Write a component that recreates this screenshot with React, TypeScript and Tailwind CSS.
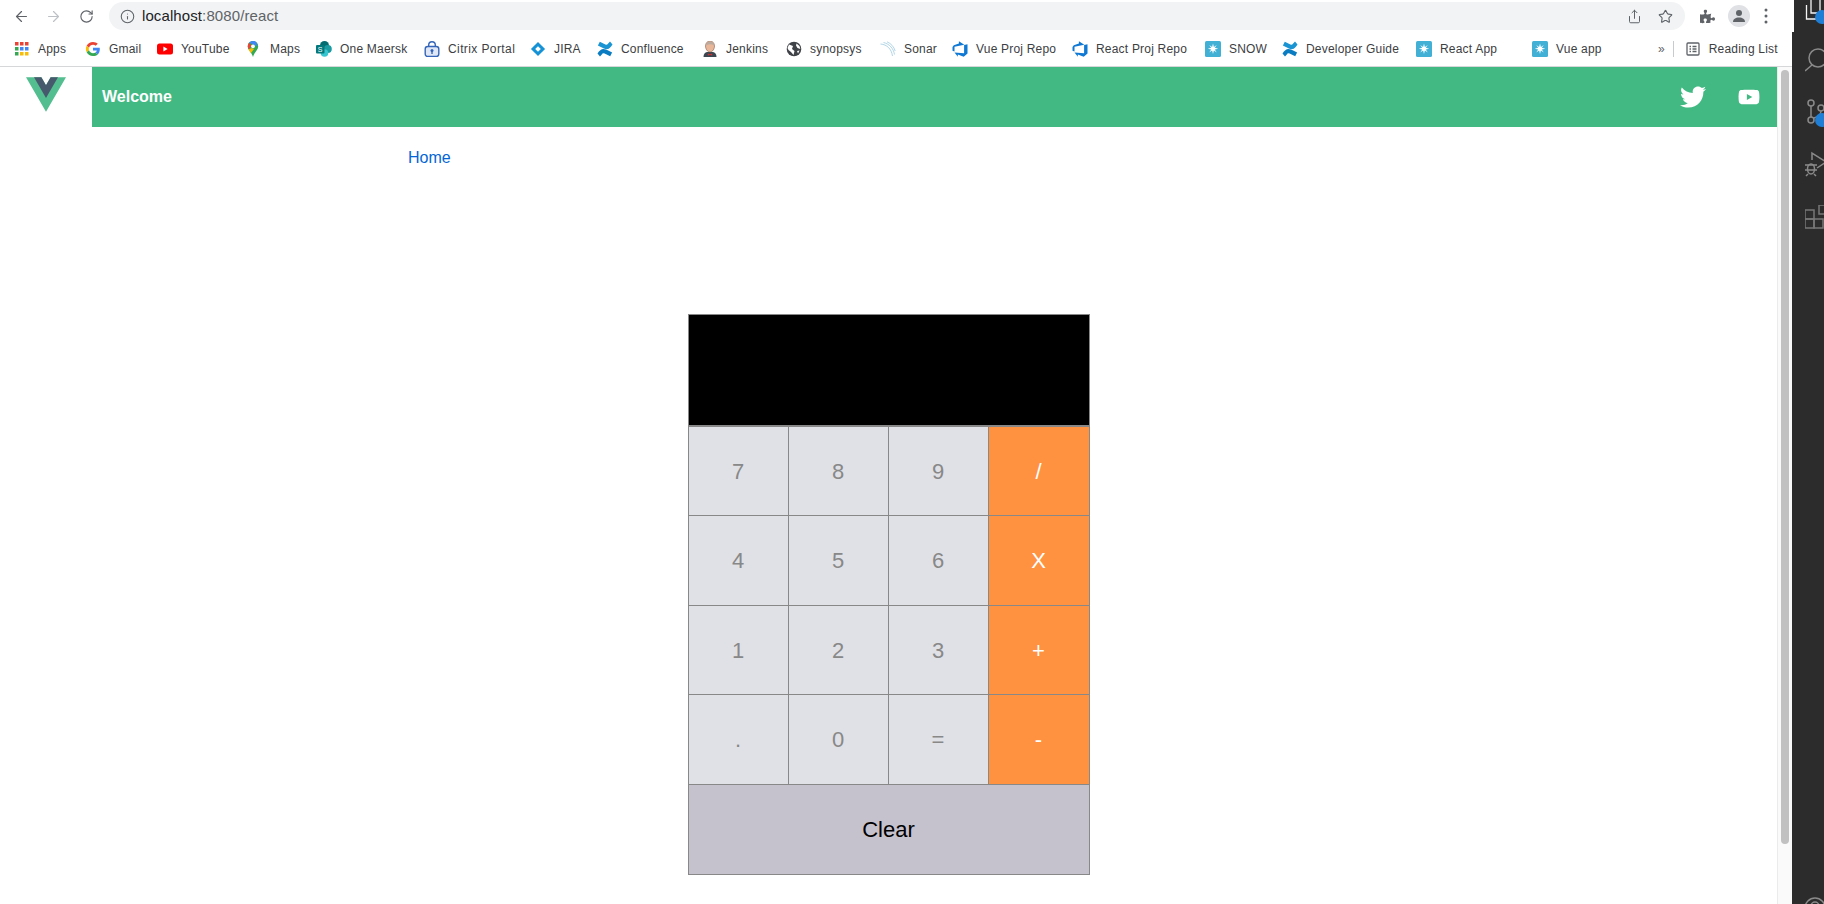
import { ArrowLeft, ArrowRight, RotateCw, Info, Share, Star } from "lucide-react";
import { FaTwitter, FaYoutube, FaPuzzlePiece } from "react-icons/fa";
import type { ReactNode } from "react";

const Snow = () => (
  <svg width="16" height="16" viewBox="0 0 16 16">
    <rect width="16" height="16" rx="1.5" fill="#42b0d5" />
    <path d="M8 2.500l.9 3.400 2.900-2-2 2.900 3.400.9-3.400.9 2 2.900-2.900-2-.9 3.400-.9-3.400-2.900 2 2-2.900-3.400-.9 3.400-.9-2-2.900 2.900 2z" fill="#fff" />
  </svg>
);
const Confluence = () => (
  <svg width="16" height="16" viewBox="0 0 16 16">
    <path d="M.5 12.600c2.600-4.400 5.200-5.600 8.600-4l6 2.800-1.900 3.900-5.600-2.700c-1.400-.6-2.200-.2-3 1.100L3 15.500z" fill="#0a7cc1" />
    <path d="M15.500 3.400c-2.600 4.400-5.200 5.600-8.600 4L.9 4.600 2.800.7l5.600 2.700c1.400.6 2.200.2 3-1.100L13 .5z" fill="#1a94d2" />
  </svg>
);
const Azure = () => (
  <svg width="16" height="16" viewBox="0 0 16 16">
    <path d="M15.500 3.200v9.400l-3.800 3.100-5.900-2.100v2.100L2.500 11.400l9.600.8V4L15.500 3.200zM12.300 3.700 6.900.3v2.300L1.800 4.200.5 5.900v3.800l2 .9V5.800z" fill="#0f78d4" />
  </svg>
);
const Apps = () => (
  <svg width="16" height="16" viewBox="0 0 16 16">
    {[
      [1, 1, "#ea4335"], [6, 1, "#ea4335"], [11, 1, "#ea4335"],
      [1, 6, "#34a853"], [6, 6, "#4285f4"], [11, 6, "#4285f4"],
      [1, 11, "#34a853"], [6, 11, "#fbbc05"], [11, 11, "#fbbc05"],
    ].map(([x, y, c]) => (
      <rect key={`${x}-${y}`} x={x as number} y={y as number} width="3.500" height="3.500" fill={c as string} />
    ))}
  </svg>
);
const Google = () => (
  <svg width="16" height="16" viewBox="-3 -3 54 54">
    <path fill="#EA4335" d="M24 9.500c3.500 0 6.700 1.200 9.200 3.600l6.900-6.900C35.900 2.400 30.500 0 24 0 14.600 0 6.500 5.400 2.600 13.200l8 6.200C12.500 13.700 17.800 9.500 24 9.500z" />
    <path fill="#4285F4" d="M47 24.500c0-1.600-.1-3.100-.4-4.500H24v9h12.900c-.6 3-2.200 5.500-4.700 7.200l7.700 6C44.400 37.900 47 31.800 47 24.500z" />
    <path fill="#FBBC05" d="M10.500 28.600c-.5-1.400-.8-3-.8-4.600s.3-3.200.8-4.600l-8-6.200C.9 16.500 0 20.100 0 24s.9 7.500 2.600 10.800z" />
    <path fill="#34A853" d="M24 48c6.500 0 11.900-2.100 15.900-5.800l-7.700-6c-2.100 1.400-4.900 2.300-8.200 2.300-6.200 0-11.500-4.200-13.400-9.900l-8 6.200C6.500 42.600 14.600 48 24 48z" />
  </svg>
);
const YouTubeFav = () => (
  <svg width="16" height="16" viewBox="0 0 16 16">
    <rect y="2.500" width="16" height="11" rx="2.500" fill="#f00" />
    <path d="M6.400 5.600v4.800L10.600 8z" fill="#fff" />
  </svg>
);
const MapsPin = () => (
  <svg width="16" height="16" viewBox="0 0 16 16">
    <path d="M8 0C5 0 2.800 2.300 2.800 5.200 2.800 9 6.600 11 8 16c1.400-5 5.200-7 5.200-10.800C13.200 2.300 11 0 8 0z" fill="#34a853" />
    <path d="M4 1.800 12 5.200c.6-2.300-.8-5.200-4-5.200-1.600 0-3 .7-4 1.800z" fill="#4285f4" />
    <path d="M2.800 5.200C2.800 3.900 3.200 2.700 4 1.800L6.500 4.500 3.600 8.400C3.100 7.500 2.800 6.400 2.800 5.200z" fill="#ea4335" />
    <path d="M3.600 8.400 6.500 6.900l2.500 1-3 4.100C5 10.700 4.100 9.500 3.600 8.400z" fill="#fbbc05" />
    <circle cx="8" cy="5.300" r="1.900" fill="#fff" />
  </svg>
);
const SharePoint = () => (
  <svg width="16" height="16" viewBox="0 0 16 16">
    <circle cx="8.500" cy="4.500" r="4.500" fill="#036c70" />
    <circle cx="11.800" cy="8" r="4" fill="#1a9ba1" />
    <circle cx="8.500" cy="12" r="3.800" fill="#37c6d0" />
    <rect x="0" y="4" width="8.500" height="8.500" rx="1" fill="#03787c" />
    <text x="4.200" y="11" fontSize="7" fill="#fff" textAnchor="middle" fontFamily="Liberation Sans">S</text>
  </svg>
);
const Citrix = () => (
  <svg width="16" height="16" viewBox="0 0 16 16">
    <rect x="1.200" y="5.500" width="13.600" height="10" rx="2.500" fill="#dfe7f7" stroke="#3465b8" strokeWidth="1.400" />
    <path d="M4.700 5.500V4a3.300 3.300 0 0 1 6.600 0v1.500" fill="none" stroke="#3465b8" strokeWidth="1.400" />
    <circle cx="8" cy="9.500" r="1.500" fill="#3465b8" />
    <rect x="7.300" y="9.500" width="1.400" height="3.500" fill="#3465b8" />
  </svg>
);
const Jira = () => (
  <svg width="16" height="16" viewBox="0 0 16 16">
    <rect x="3" y="3" width="10" height="10" transform="rotate(45 8 8)" fill="#1592d6" />
    <rect x="6" y="6" width="4" height="4" transform="rotate(45 8 8)" fill="#fff" />
  </svg>
);
const Jenkins = () => (
  <svg width="16" height="16" viewBox="0 0 16 16">
    <path d="M1.500 16c0-3 1.500-4.500 3.500-5h6c2 .5 3.500 2 3.500 5z" fill="#3a4750" />
    <path d="M3.500 5c0-3 2-5 4.500-5s4.500 2 4.500 5-2 6-4.500 6-4.500-3-4.500-6z" fill="#e8b79a" stroke="#8a5a44" strokeWidth=".6" />
    <path d="M4 4.500C4.500 1.500 6.500.4 8 .4c1.800 0 3.700 1 4 4C10 2.800 6.500 2.800 4 4.500z" fill="#b9aba0" />
    <path d="M5.800 12.500 8 13.300l2.200-.8v2.200L8 13.800l-2.200.9z" fill="#c33" />
  </svg>
);
const Globe = () => (
  <svg width="16" height="16" viewBox="0 0 16 16">
    <circle cx="8" cy="8" r="7.300" fill="#3f4247" />
    <path d="M3 3.500 7 5 6 8l2.500 2-1 4L5 11 2.500 9 1.500 7zM10.500 2.500l3 2.500.8 3-2.800-1-1.500-2.500zM11 10l2.500-.5-1.500 3z" fill="#fff" />
  </svg>
);
const Sonar = () => (
  <svg width="16" height="16" viewBox="0 0 16 16" fill="none" stroke="#8fc3dc" strokeWidth=".7">
    <path d="M.5 3C7 3.500 11.500 8 12.500 15" />
    <path d="M3.500 1.500C9.500 3 13.500 7.500 14.500 13.500" />
    <path d="M7 .8c4 1.700 7 5 8.200 9.200" />
  </svg>
);
const ReadingList = () => (
  <svg width="16" height="16" viewBox="0 0 16 16" fill="none" stroke="#5f6368" strokeWidth="1.300">
    <rect x="2" y="2" width="12" height="12" rx="1" />
    <path d="M4.500 5.500h1.500M7.500 5.500h4M4.500 8h1.500M7.500 8h4M4.500 10.500h1.500M7.500 10.500h4" />
  </svg>
);

const bookmarks: { label: string; icon: ReactNode; cls: string }[] = [
  { label: "Apps", icon: <Apps />, cls: "w-[71px]" },
  { label: "Gmail", icon: <Google />, cls: "w-[72px] gap-[7px]" },
  { label: "YouTube", icon: <YouTubeFav />, cls: "w-[88px]" },
  { label: "Maps", icon: <MapsPin />, cls: "w-[71px] gap-[9px]" },
  { label: "One Maersk", icon: <SharePoint />, cls: "w-[108px]" },
  { label: "Citrix Portal", icon: <Citrix />, cls: "w-[106px] tracking-[0.4px]" },
  { label: "JIRA", icon: <Jira />, cls: "w-[67px]" },
  { label: "Confluence", icon: <Confluence />, cls: "w-[105px]" },
  { label: "Jenkins", icon: <Jenkins />, cls: "w-[84px]" },
  { label: "synopsys", icon: <Globe />, cls: "w-[94px]" },
  { label: "Sonar", icon: <Sonar />, cls: "w-[72px]" },
  { label: "Vue Proj Repo", icon: <Azure />, cls: "w-[120px]" },
  { label: "React Proj Repo", icon: <Azure />, cls: "w-[133px]" },
  { label: "SNOW", icon: <Snow />, cls: "w-[77px]" },
  { label: "Developer Guide", icon: <Confluence />, cls: "w-[134px]" },
  { label: "React App", icon: <Snow />, cls: "w-[116px]" },
  { label: "Vue app", icon: <Snow />, cls: "w-[126px]" },
];

const keys: { label: string; op?: boolean }[] = [
  { label: "7" }, { label: "8" }, { label: "9" }, { label: "/", op: true },
  { label: "4" }, { label: "5" }, { label: "6" }, { label: "X", op: true },
  { label: "1" }, { label: "2" }, { label: "3" }, { label: "+", op: true },
  { label: "." }, { label: "0" }, { label: "=" }, { label: "-", op: true },
];

export default function App() {
  return (
    <div className="flex h-screen w-screen overflow-hidden bg-[#2c2c2c] font-['Liberation_Sans',Arial,sans-serif]">
      <div className="flex w-[1792px] shrink-0 flex-col bg-white">
        <div className="relative z-10 flex h-[32px] w-[1794px] shrink-0 items-center bg-white pl-[13px] pr-[16px]">
          <ArrowLeft size={17} strokeWidth={1.7} className="text-[#5f6368]" />
          <ArrowRight size={17} strokeWidth={1.7} className="ml-[15px] text-[#bdc1c6]" />
          <RotateCw size={15} strokeWidth={1.8} className="ml-[17px] text-[#5f6368]" />
          <div className="ml-[15px] flex h-[28px] w-[1576px] items-center rounded-full bg-[#f1f3f4] pl-[11px] pr-[12px]">
            <Info size={15} strokeWidth={1.7} className="text-[#5f6368]" />
            <span className="ml-[7px] text-[15px] tracking-[0.1px] text-[#5f6368]">
              <span className="text-[#202124]">localhost</span>:8080/react
            </span>
            <Share size={15} strokeWidth={1.6} className="ml-auto text-[#5f6368]" />
            <Star size={15} strokeWidth={1.8} className="ml-[16px] text-[#5f6368]" />
          </div>
          <FaPuzzlePiece size={15} className="ml-[15px] text-[#5f6368]" />
          <div className="ml-[13px] flex h-[22px] w-[22px] items-center justify-center rounded-full bg-[#dfe1e5]">
            <svg width="14" height="14" viewBox="0 0 14 14" fill="#5f6368">
              <circle cx="7" cy="4" r="3" />
              <path d="M1 13c0-3 2.500-4.500 6-4.500s6 1.500 6 4.500z" />
            </svg>
          </div>
          <svg className="ml-[14px]" width="4" height="16" viewBox="0 0 4 16" fill="#5f6368">
            <circle cx="2" cy="2" r="1.500" />
            <circle cx="2" cy="8" r="1.500" />
            <circle cx="2" cy="14" r="1.500" />
          </svg>
        </div>
        <div className="flex h-[35px] shrink-0 items-center border-b border-[#d6d7d9] bg-white pl-[14px]">
          {bookmarks.map((b) => (
            <div key={b.label} className={`flex shrink-0 items-center gap-[8px] tracking-[0.2px] ${b.cls}`}>
              {b.icon}
              <span className="whitespace-nowrap text-[12px] text-[#3c4043]">{b.label}</span>
            </div>
          ))}
          <span className="text-[12px] text-[#5f6368]">»</span>
          <div className="ml-[8px] h-[16px] w-px bg-[#c8cacd]" />
          <div className="ml-[11px] flex items-center gap-[8px]">
            <ReadingList />
            <span className="whitespace-nowrap text-[12px] tracking-[0.2px] text-[#3c4043]">Reading List</span>
          </div>
        </div>
        <div className="flex min-h-0 flex-1">
          <div className="w-[1777px] shrink-0">
            <div className="flex h-[60px] items-stretch">
              <div className="flex w-[92px] shrink-0 justify-center pt-[10px]">
                <svg width="40" height="35" viewBox="0 0 261.76 226.69" className="opacity-90">
                  <path d="M161.096.001l-30.225 52.351L100.647.001H-.005l130.877 226.688L261.749.001z" fill="#41b883" />
                  <path d="M161.096.001l-30.225 52.351L100.647.001H52.346l78.526 136.01L209.398.001z" fill="#34495e" />
                </svg>
              </div>
              <div className="flex flex-1 items-center bg-[#42b983] pl-[10px] pr-[17px]">
                <span className="text-[16px] font-bold text-white">Welcome</span>
                <FaTwitter size={26} className="ml-auto text-white" />
                <FaYoutube size={22} className="ml-[32px] text-white" />
              </div>
            </div>
            <div className="pl-[408px] pt-[19px]">
              <a className="text-[16px] leading-[20px] text-[#0366d6]">Home</a>
            </div>
            <div className="mx-auto mt-[144px] w-[402px] border-t border-[#888888]">
              <div className="h-[112px] border-x border-b-2 border-[#888888] bg-black" />
              <div className="grid grid-cols-[100px_100px_100px_102px] grid-rows-[88px_90px_89px_90px]">
                {keys.map((k, i) => (
                  <div
                    key={k.label}
                    className={`flex items-center justify-center border-l border-[#888888] text-[22px] ${i > 3 ? "border-t" : ""} ${
                      k.op ? "border-r bg-[#ff9240] text-white" : "bg-[#e0e1e6] text-[#888888]"
                    }`}
                  >
                    {k.label}
                  </div>
                ))}
              </div>
              <div className="flex h-[91px] items-center justify-center border border-[#888888] bg-[#c5c2cd] text-[22px] text-black">
                Clear
              </div>
            </div>
          </div>
          <div className="w-[15px] shrink-0 border-l border-[#ebebeb] bg-[#fafafa] pl-[3px] pt-[3px]">
            <div className="h-[774px] w-[8px] rounded-full bg-[#c1c1c1]" />
          </div>
        </div>
      </div>
      <div className="flex w-[32px] shrink-0 flex-col items-start overflow-hidden pl-[13px]">
        <svg className="shrink-0" width="30" height="24" viewBox="0 0 30 24" fill="none" stroke="#f4f4f4" strokeWidth="1.300">
          <path d="M1.500 5v14h11" />
          <path d="M6 0v13h9V0" />
          <circle cx="17" cy="17" r="7" fill="#1f7ed6" stroke="none" />
        </svg>
        <svg className="mt-[22px] shrink-0" width="30" height="26" viewBox="0 0 30 26" fill="none" stroke="#8a8a8a" strokeWidth="1.500">
          <circle cx="13" cy="12" r="9" />
          <path d="M7 19 0 25" />
        </svg>
        <svg className="mt-[23px] shrink-0" width="30" height="33" viewBox="0 0 30 33" fill="none" stroke="#8a8a8a" strokeWidth="1.500">
          <circle cx="6" cy="8" r="3" />
          <circle cx="6" cy="25" r="3" />
          <circle cx="16" cy="13" r="3" />
          <path d="M6 11v11M9 23c4-1 7-4 7-7" />
          <circle cx="17" cy="25" r="7" fill="#1f7ed6" stroke="none" />
        </svg>
        <svg className="mt-[22px] shrink-0" width="30" height="28" viewBox="0 0 30 28" fill="none" stroke="#8a8a8a" strokeWidth="1.500">
          <path d="M7 10V3l14 9-9 6" />
          <ellipse cx="6" cy="19" rx="3.500" ry="5" />
          <path d="M0 15h12M0 20h12M1 26l2-2M11 26l-2-2" />
        </svg>
        <svg className="mt-[27px] shrink-0" width="30" height="24" viewBox="0 0 30 24" fill="none" stroke="#777777" strokeWidth="1.500">
          <rect x="0" y="5" width="9" height="9" />
          <rect x="0" y="14" width="9" height="9" />
          <rect x="9" y="14" width="9" height="9" />
          <rect x="14" y="0" width="9" height="9" />
        </svg>
        <svg className="mt-auto shrink-0" width="30" height="7" viewBox="0 0 30 7" fill="none" stroke="#8a8a8a" strokeWidth="1.500">
          <circle cx="10" cy="11" r="10" />
          <circle cx="10" cy="9" r="4" />
        </svg>
      </div>
    </div>
  );
}
